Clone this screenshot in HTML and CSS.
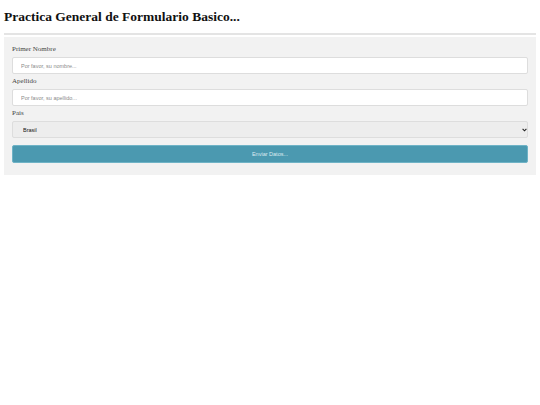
FILE: index.html
```html
<!DOCTYPE html>
<html lang="es">
<head>
<meta charset="utf-8">
<title>Practica General de Formulario Basico</title>
<link rel="stylesheet" href="styles.css">
</head>
<body>
<h1 class="title">Practica General de Formulario Basico...</h1>
<hr class="rule">
<form class="form-box">
  <label class="lbl" for="nombre">Primer Nombre</label>
  <input class="field" id="nombre" type="text" placeholder="Por favor, su nombre...">
  <label class="lbl" for="apellido">Apellido</label>
  <input class="field" id="apellido" type="text" placeholder="Por favor, su apellido...">
  <label class="lbl" for="pais">Pais</label>
  <div class="select-wrap">
    <select class="field select" id="pais">
      <option>Brasil</option>
      <option>Argentina</option>
      <option>Chile</option>
    </select>
    <svg class="arrow" width="5" height="4" viewBox="0 0 5 4" aria-hidden="true">
      <path d="M0.6 0.8 L2.5 2.8 L4.4 0.8" fill="none" stroke="#222" stroke-width="1.1"/>
    </svg>
  </div>
  <button class="submit" type="button">Enviar Datos...</button>
</form>
</body>
</html>
```

FILE: styles.css
```css
html, body {
  margin: 0;
  padding: 0;
  background: #ffffff;
}
body {
  padding: 0 4px;
  font-family: "Liberation Serif", "Times New Roman", serif;
  color: #111;
}
.title {
  margin: 9px 0 0;
  font-size: 13.5px;
  line-height: 16px;
  font-weight: bold;
  color: #111;
}
.rule {
  margin: 8px 0 0;
  border: 0;
  height: 2px;
  background: #e4e4e4;
}
.form-box {
  margin-top: 2px;
  background: #f2f2f2;
  padding: 8px 8px 12px;
  display: flex;
  flex-direction: column;
}
.lbl {
  display: block;
  font-size: 7px;
  line-height: 8px;
  height: 8px;
  color: #444;
  margin: 0 0 4px;
}
.field {
  box-sizing: border-box;
  width: 100%;
  height: 17px;
  margin: 0 0 3px;
  border: 1px solid #dddddd;
  border-radius: 2px;
  background: #ffffff;
  padding: 0 8px;
  font-family: "Liberation Sans", Arial, sans-serif;
  font-size: 5.5px;
  color: #222;
  outline: none;
}
.field::placeholder {
  color: #8a8a8a;
}
.select-wrap {
  position: relative;
  margin-bottom: 7px;
}
.select {
  display: block;
  appearance: none;
  -webkit-appearance: none;
  background: #ededed;
  margin: 0;
  padding-left: 10px;
  color: #111;
}
.arrow {
  position: absolute;
  right: 1px;
  top: 7px;
}
.submit {
  box-sizing: border-box;
  width: 100%;
  height: 18px;
  border: 1px solid #6fb3c6;
  border-radius: 2px;
  background: #4b99b0;
  color: #dcebf0;
  font-family: "Liberation Sans", Arial, sans-serif;
  font-size: 5.5px;
  padding: 0;
}
```
